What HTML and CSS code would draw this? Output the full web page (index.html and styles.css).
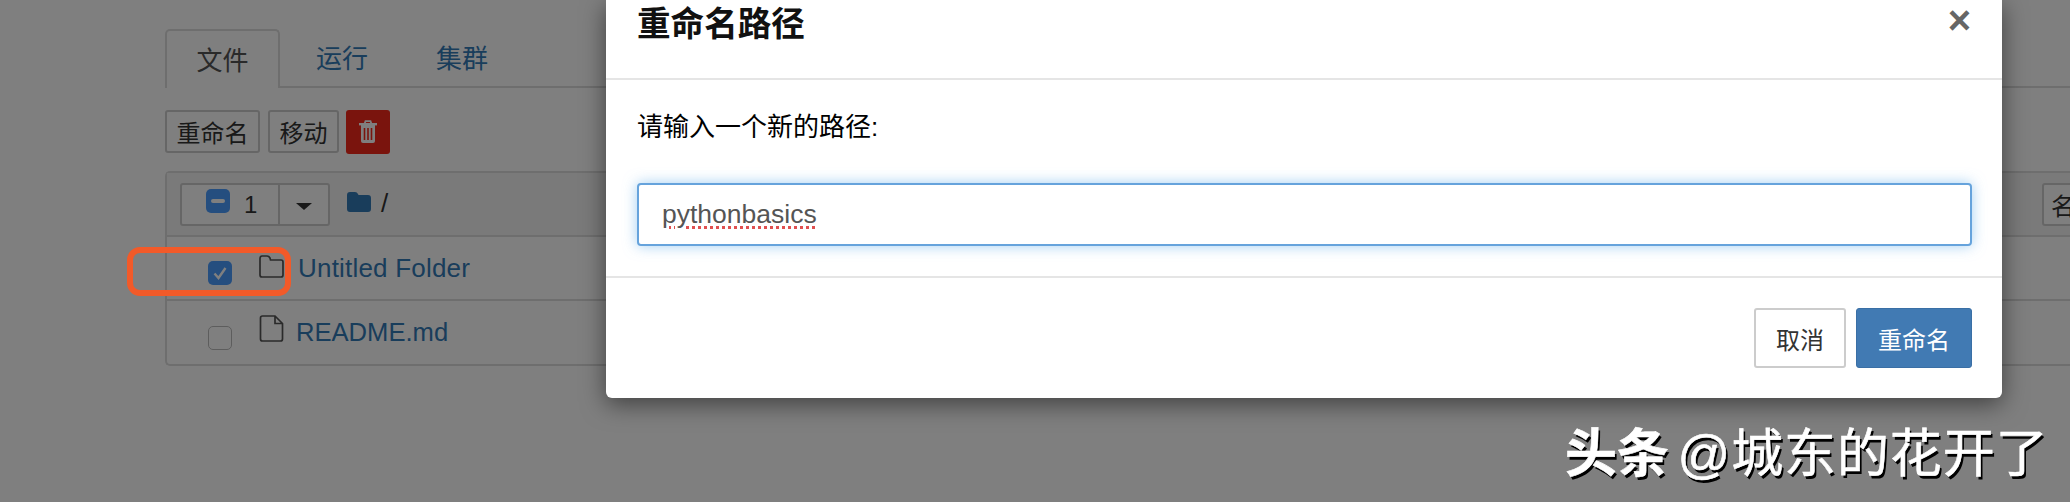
FILE: index.html
```html
<!DOCTYPE html>
<html lang="zh-CN">
  <head>
    <meta charset="UTF-8" />
    <title>重命名路径</title>
    <link rel="stylesheet" href="styles.css">
  </head>
  <body>
    <div class="page">
      <ul class="tabs">
        <li class="tab active">文件</li>
        <li class="tab">运行</li>
        <li class="tab">集群</li>
      </ul>

      <div class="toolbar">
        <button type="button" class="tool-btn rename">重命名</button>
        <button type="button" class="tool-btn move">移动</button>
        <button type="button" class="trash-btn">
          <svg width="20" height="24" viewBox="0 0 20 24">
            <path d="M6.500 4 L7.500 1.200 H12.500 L13.500 4" fill="none" stroke="#fff" stroke-width="1.800"/>
            <path d="M1 4.200 H19" stroke="#fff" stroke-width="2.400"/>
            <path d="M3 5 V21 Q3 23 5 23 H15 Q17 23 17 21 V5 Z" fill="#fff"/>
            <path d="M6.500 8 V20 M10 8 V20 M13.500 8 V20" stroke="#f4281a" stroke-width="1.600"/>
          </svg>
        </button>
      </div>

      <div class="panel">
        <div class="list-head">
          <div class="select-group">
            <div class="select-count">
              <span class="check minus"></span>
              <span class="count">1</span>
            </div>
            <div class="select-caret"><span class="caret"></span></div>
          </div>
          <svg class="root-icon" width="24" height="20" viewBox="0 0 24 20">
            <path d="M0 3 Q0 0 3 0 H8 Q10 0 11 2 L11.500 3 H21 Q24 3 24 6 V17 Q24 20 21 20 H3 Q0 20 0 17 Z" fill="#337ab7"/>
          </svg>
          <span class="root-path">/</span>
          <button type="button" class="sort-btn">名称</button>
        </div>
        <div class="list-row">
          <span class="check checked">
            <svg width="24" height="24" viewBox="0 0 24 24">
              <path d="M6.500 12.500 L10.500 17 L17.500 7" fill="none" stroke="#fff" stroke-width="2.400"/>
            </svg>
          </span>
          <svg class="item-icon" width="25" height="23" viewBox="0 0 25 23">
            <path d="M1 4 Q1 1 3 1 H8 Q10 1 11 3 L11.500 5 H22 Q24 5 24 7 V20 Q24 22 22 22 H3 Q1 22 1 20 Z" fill="none" stroke="#555" stroke-width="1.700"/>
          </svg>
          <a class="item-link">Untitled Folder</a>
        </div>
        <div class="list-row file">
          <span class="check"></span>
          <svg class="item-icon" width="25" height="27" viewBox="0 0 25 27">
            <path d="M1.500 3 Q1.500 1 3.500 1 H16 L23.500 8.500 V24 Q23.500 26 21.500 26 H3.500 Q1.500 26 1.500 24 Z M16 1 V8.500 H23.500" fill="none" stroke="#555" stroke-width="1.700"/>
          </svg>
          <a class="item-link">README.md</a>
        </div>
      </div>
      <div class="highlight"></div>
    </div>

    <div class="backdrop"></div>

    <div class="modal">
      <div class="modal-header">
        <h4 class="modal-title">重命名路径</h4>
        <span class="modal-close">×</span>
      </div>
      <div class="modal-body">
        <p class="modal-label">请输入一个新的路径:</p>
        <div class="path-input"><span class="misspelled">pythonbasics</span></div>
      </div>
      <div class="modal-footer">
        <button type="button" class="btn cancel">取消</button>
        <button type="button" class="btn primary">重命名</button>
      </div>
    </div>

    <div class="watermark"><b class="watermark-site">头条</b> <span class="watermark-name">@城东的花开了</span></div>
  </body>
</html>
```

FILE: styles.css
```css
* {
  box-sizing: border-box;
}

html, body {
  height: 100%;
}

body {
  margin: 0;
  overflow: hidden;
  background: #fff;
  color: #000;
  font-family: "Liberation Sans", "Noto Sans CJK SC", sans-serif;
}

.page {
  padding: 29px 0 0 165px;
  width: 2070px;
}

/* tabs */
.tabs {
  display: flex;
  margin: 0;
  padding: 0;
  height: 59px;
  list-style: none;
  border-bottom: 2px solid #ddd;
}

.tab {
  width: 120px;
  padding-top: 14px;
  font-size: 26px;
  line-height: 33px;
  text-align: center;
  color: #337ab7;
}

.tab.active {
  width: 115px;
  height: 59px;
  margin-right: 2px;
  color: #555;
  background: #fff;
  border: 2px solid #ddd;
  border-bottom: 0;
  border-radius: 5px 5px 0 0;
}

/* toolbar */
.toolbar {
  display: flex;
  align-items: flex-start;
  margin-top: 22px;
  height: 44px;
}

.tool-btn {
  height: 43px;
  margin-right: 8px;
  padding: 0;
  font: inherit;
  font-size: 24px;
  color: #333;
  background: #fff;
  border: 2px solid #ccc;
  border-radius: 3px;
}

.rename {
  width: 95px;
}

.move {
  width: 71px;
  margin-right: 7px;
}

.trash-btn {
  display: flex;
  align-items: center;
  justify-content: center;
  width: 44px;
  height: 44px;
  padding: 0;
  background: #f4281a;
  border: 0;
  border-radius: 3px;
}

/* file list */
.panel {
  margin-top: 17px;
  height: 195px;
  border: 2px solid #ddd;
  border-right: 0;
  border-radius: 5px 0 0 5px;
}

.list-head {
  display: flex;
  align-items: center;
  height: 64px;
  padding-left: 13px;
  background: #f5f5f5;
  border-bottom: 2px solid #ddd;
}

.select-group {
  display: flex;
  height: 43px;
  border: 2px solid #ccc;
  border-radius: 3px;
  background: #fff;
}

.select-count {
  display: flex;
  align-items: center;
  width: 98px;
  padding-left: 24px;
  border-right: 2px solid #ccc;
}

.select-caret {
  display: flex;
  align-items: center;
  justify-content: center;
  width: 48px;
}

.caret {
  margin-top: 5px;
  border-top: 7px solid #333;
  border-left: 8px solid transparent;
  border-right: 8px solid transparent;
}

.count {
  margin: 2px 0 0 14px;
  font-size: 24px;
  color: #333;
}

.check {
  display: block;
  flex: none;
  width: 24px;
  height: 24px;
  background: #fff;
  border: 1px solid #bbb;
  border-radius: 5px;
}

.check.minus {
  position: relative;
  margin-top: -6px;
  background: #4a9cff;
  border: 0;
}

.check.minus::after {
  content: "";
  position: absolute;
  left: 5px;
  right: 5px;
  top: 10px;
  height: 4px;
  border-radius: 2px;
  background: #fff;
}

.check.checked {
  background: #4a9cff;
  border: 0;
}

.check.checked svg {
  display: block;
}

.root-icon {
  margin: -5px 0 0 17px;
}

.root-path {
  margin: -2px 0 0 10px;
  font-size: 26px;
  color: #333;
}

.sort-btn {
  margin-left: auto;
  width: 60px;
  height: 43px;
  padding: 0 0 0 7px;
  margin-right: -32px;
  font: inherit;
  font-size: 24px;
  text-align: left;
  color: #333;
  background: #fff;
  border: 2px solid #ccc;
  border-radius: 3px;
  overflow: hidden;
  white-space: nowrap;
}

.list-row {
  display: flex;
  align-items: center;
  height: 64px;
  padding-left: 41px;
  border-bottom: 2px solid #ddd;
}

.list-row.file {
  border-bottom: 0;
}

.list-row .check {
  margin-top: 10px;
}

.item-icon {
  margin: -4px 0 0 27px;
}

.file .item-icon {
  margin-top: -10px;
}

.item-link {
  margin: 0 0 0 14px;
  font-size: 26px;
  letter-spacing: 0.2px;
  color: #337ab7;
}

.file .item-link {
  margin: -1px 0 0 12px;
  font-size: 25.600px;
  letter-spacing: 0;
}

/* orange note drawn on the screenshot */
.highlight {
  position: absolute;
  left: 127px;
  top: 247px;
  width: 164px;
  height: 49px;
  border: 6px solid #f25a29;
  border-radius: 13px;
  z-index: 2;
}

.backdrop {
  position: absolute;
  inset: 0;
  background: rgba(0, 0, 0, 0.5);
}

/* modal */
.modal {
  position: absolute;
  left: 606px;
  top: 0;
  width: 1396px;
  height: 398px;
  background: #fff;
  border-radius: 0 0 6px 6px;
  box-shadow: 0 6px 24px rgba(0, 0, 0, 0.5);
  z-index: 3;
}

.modal-header {
  display: flex;
  justify-content: space-between;
  height: 80px;
  padding: 0 31px;
  border-bottom: 2px solid #e5e5e5;
}

.modal-title {
  margin: 3px 0 0;
  font-size: 33.600px;
  line-height: 44px;
  font-weight: 700;
  color: #111;
}

.modal-close {
  font-size: 40px;
  line-height: 40px;
  font-weight: 700;
  color: #666;
}

.modal-body {
  height: 196px;
  padding: 0 30px 0 31px;
}

.modal-label {
  margin: 0;
  padding-top: 31px;
  font-size: 26px;
  line-height: 33px;
}

.path-input {
  height: 63px;
  margin-top: 39px;
  padding-left: 23px;
  font-size: 26.500px;
  line-height: 58px;
  color: #555;
  background: #fff;
  border: 2px solid #66a3dc;
  border-radius: 4px;
  box-shadow: 0 0 14px rgba(102, 175, 233, 0.6);
}

.misspelled {
  text-decoration: underline dotted #e05050 3px;
  text-underline-offset: 3px;
}

.modal-footer {
  display: flex;
  justify-content: flex-end;
  gap: 10px;
  padding: 30px 30px 0 0;
  border-top: 2px solid #e5e5e5;
}

.btn {
  height: 60px;
  padding: 0;
  font: inherit;
  font-size: 24px;
  border-radius: 3px;
}

.cancel {
  width: 92px;
  color: #333;
  background: #fff;
  border: 2px solid #ccc;
}

.primary {
  width: 116px;
  color: #fff;
  background: #417ab3;
  border: 1px solid #3a6fa5;
}

.watermark {
  position: absolute;
  left: 1565px;
  top: 421px;
  z-index: 4;
  font-size: 52px;
  line-height: 66px;
  color: #fff;
  white-space: nowrap;
  -webkit-text-stroke: 0.6px #fff;
  text-shadow: 2px 3px 0 #000;
}

.watermark-site {
  margin-right: -6px;
}

.watermark-name {
  letter-spacing: 0.9px;
}
```
